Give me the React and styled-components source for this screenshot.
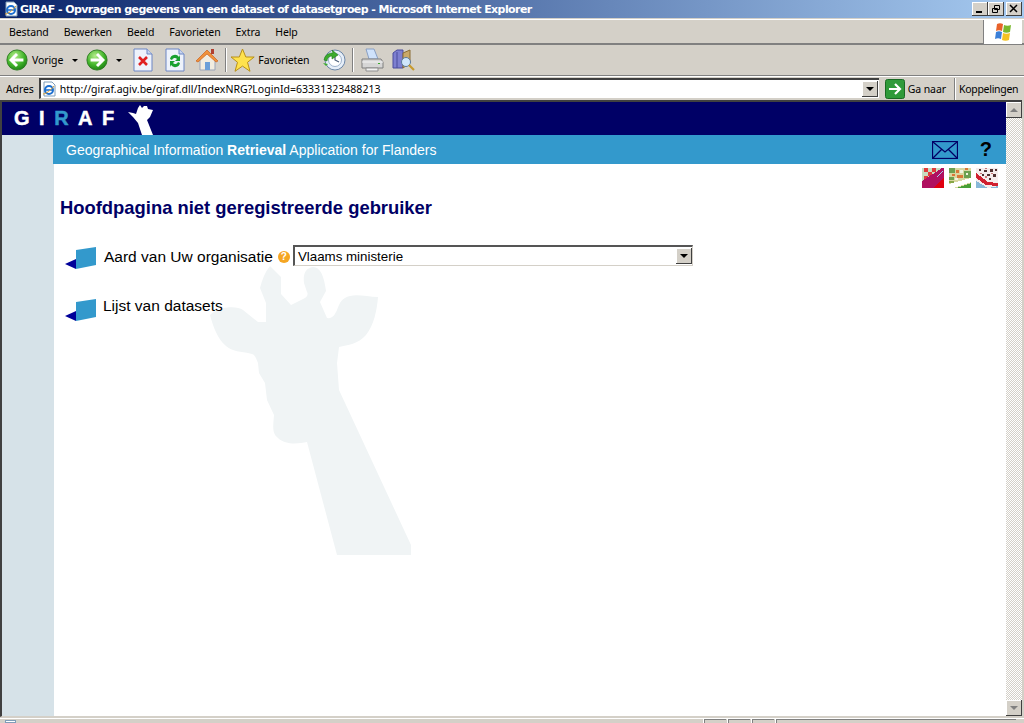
import React from 'react';
import styled, {createGlobalStyle} from 'styled-components';

const GlobalStyle = createGlobalStyle`
    html, body {
        margin: 0;
        padding: 0;
        overflow: hidden;
        background: #d4d0c8;
    }
    * { box-sizing: border-box; }
`

const Win = styled.div`
    width: 1024px;
    height: 723px;
    display: flex;
    flex-direction: column;
    overflow: hidden;
    background: #d4d0c8;
    font-family: "Noto Sans", "DejaVu Sans", sans-serif;
    font-size: 10.5px;
    letter-spacing: -0.1px;
    color: #000;
`

const TitleBar = styled.div`
    height: 18px;
    flex: none;
    display: flex;
    align-items: center;
    padding: 0 2px 0 3px;
    background: linear-gradient(90deg, #0a246a 0%, #a6caf0 100%);
`

const TitleText = styled.div`
    flex: 1;
    margin-left: 1px;
    font-family: "DejaVu Sans", sans-serif;
    font-size: 11px;
    font-weight: bold;
    letter-spacing: -0.58px;
    color: #fff;
    white-space: nowrap;
`

const CaptionBtn = styled.div`
    width: 16px;
    height: 14px;
    margin-left: ${props => props.gap || 0}px;
    background: #d4d0c8;
    box-shadow: inset -1px -1px 0 #404040, inset 1px 1px 0 #fff;
    display: flex;
    align-items: center;
    justify-content: center;
`

const MenuRow = styled.div`
    height: 26px;
    flex: none;
    display: flex;
    align-items: center;
    border-top: 1px solid #fff;
    border-bottom: 2px solid #808080;
    margin-top: 1px;
    padding-left: 9px;
`

const MenuItem = styled.span`
    margin-right: 15px;
`

const FlagBox = styled.div`
    margin-left: auto;
    width: 39px;
    height: 24px;
    margin-right: 2px;
    background: #fff;
    border-left: 1px solid #808080;
    display: flex;
    align-items: center;
    justify-content: center;
`

const ToolRow = styled.div`
    height: 31px;
    flex: none;
    display: flex;
    align-items: center;
    padding-left: 6px;
    border-bottom: 1px solid #808080;
`

const ToolIcon = styled.span`
    display: flex;
    margin-left: ${props => props.gap || 0}px;
`

const ToolLabel = styled.span`
    margin-left: ${props => props.gap || 4}px;
    white-space: nowrap;
`

const Caret = styled.span`
    width: 0;
    height: 0;
    margin-left: ${props => props.gap || 6}px;
    border-left: 3px solid transparent;
    border-right: 3px solid transparent;
    border-top: 3px solid #000;
`

const Sep = styled.span`
    width: 1px;
    height: 24px;
    margin-left: ${props => props.gap || 6}px;
    background: #808080;
    box-shadow: 1px 0 0 #fff;
`

const AddressRow = styled.div`
    height: 24px;
    flex: none;
    display: flex;
    align-items: center;
    padding-left: 6px;
    border-top: 1px solid #fff;
`

const AddressBox = styled.div`
    width: 840px;
    height: 21px;
    margin-left: 5px;
    flex: none;
    display: flex;
    align-items: center;
    background: #fff;
    border-top: 2px solid #404040;
    border-left: 2px solid #404040;
    border-bottom: 1px solid #d4d0c8;
`

const AddressText = styled.span`
    flex: 1;
    margin-left: 3px;
    letter-spacing: 0.03px;
    white-space: nowrap;
`

const DropBtn = styled.div`
    width: 16px;
    height: 16px;
    flex: none;
    margin-right: ${props => props.gap || 0}px;
    background: #d4d0c8;
    box-shadow: inset -1px -1px 0 #404040, inset 1px 1px 0 #fff;
    display: flex;
    align-items: center;
    justify-content: center;
`

const DropTri = styled.span`
    width: 0;
    height: 0;
    border-left: 4px solid transparent;
    border-right: 4px solid transparent;
    border-top: 4px solid ${props => props.color || '#000'};
`

const GoBox = styled.div`
    margin-left: 6px;
    display: flex;
    align-items: center;
    height: 22px;
    flex: none;
`

const LinksBox = styled.div`
    margin-left: 9px;
    padding-left: 3px;
    height: 22px;
    flex: none;
    display: flex;
    align-items: center;
    letter-spacing: -0.28px;
    white-space: nowrap;
    border-left: 1px solid #fff;
    box-shadow: -1px 0 0 #808080;
`

const PageFrame = styled.div`
    height: 617px;
    flex: none;
    display: flex;
    margin-right: 2px;
    border-top: 2px solid #404040;
    border-left: 2px solid #404040;
    border-bottom: 1px solid #d4d0c8;
    background: #fff;
`

const PageBody = styled.div`
    flex: 1;
    display: flex;
    flex-direction: column;
    font-family: "Liberation Sans", Arial, sans-serif;
    letter-spacing: 0;
    overflow: hidden;
`

const LogoBar = styled.div`
    height: 33px;
    flex: none;
    background: #000066;
    display: flex;
    align-items: center;
    padding-left: 12px;
`

const LogoText = styled.div`
    font-size: 20px;
    font-weight: bold;
    letter-spacing: 9.5px;
    color: #fff;
    white-space: nowrap;
    -webkit-text-stroke: 0.5px #fff;
`

const LogoR = styled.span`
    color: #3399cc;
    -webkit-text-stroke: 0.5px #3399cc;
`

const LogoGiraffe = styled.svg`
    margin-left: 4px;
    align-self: flex-end;
`

const Columns = styled.div`
    flex: 1;
    display: flex;
`

const Side = styled.div`
    width: 51px;
    flex: none;
    background: #d6e2e8;
`

const Main = styled.div`
    flex: 1;
    position: relative;
    display: flex;
    flex-direction: column;
`

const AppBar = styled.div`
    height: 29px;
    flex: none;
    background: #3399cc;
    display: flex;
    align-items: center;
    padding-left: 13px;
    font-size: 14px;
    color: #fff;
`

const AppTitle = styled.div`
    flex: 1;
`

const Help = styled.span`
    margin: 0 14px 0 22px;
    font-size: 20px;
    font-weight: bold;
    color: #000;
`

const Front = styled.div`
    flex: 1;
    position: relative;
    z-index: 1;
    display: flex;
    flex-direction: column;
`

const Content = styled.div`
    flex: 1;
    border-left: 1px solid #d6e2e8;
`

const ThumbRow = styled.div`
    display: flex;
    justify-content: flex-end;
    gap: 5px;
    padding: 4px 8px 0 0;
    height: 24px;
`

const Heading = styled.h1`
    margin: 8px 0 0 6px;
    font-size: 18.4px;
    font-weight: bold;
    color: #000066;
    line-height: 24px;
`

const Row = styled.div`
    display: flex;
    align-items: flex-start;
    margin: ${props => props.top}px 0 0 10px;
    font-size: 15.5px;
`

const RowIcon = styled.svg`
    flex: none;
    margin-top: ${props => props.top}px;
`

const Label = styled.span`
    margin: ${props => props.top}px 0 0 ${props => props.left}px;
    line-height: 18px;
`

const HelpDot = styled.span`
    width: 12px;
    height: 12px;
    margin: 6px 3px 0 5px;
    border-radius: 50%;
    background: #f5a623;
    color: #fff;
    font-size: 10px;
    font-weight: bold;
    line-height: 12px;
    text-align: center;
`

const SelectBox = styled.div`
    width: 400px;
    height: 21px;
    display: flex;
    align-items: center;
    padding-left: 3px;
    background: #fff;
    border-top: 2px solid #555;
    border-left: 2px solid #555;
    border-right: 1px solid #d4d0c8;
    border-bottom: 1px solid #d4d0c8;
    font-size: 13.33px;
`

const SelectValue = styled.span`
    flex: 1;
`

const Watermark = styled.svg`
    position: absolute;
    left: -53px;
    top: -135px;
    pointer-events: none;
    z-index: 0;
`

const ScrollBar = styled.div`
    width: 16px;
    flex: none;
    display: flex;
    flex-direction: column;
    background: repeating-conic-gradient(#d4d0c8 0 25%, #fff 0 50%) 0 0 / 2px 2px;
`

const ScrollTrack = styled.div`
    flex: 1;
`

const ScrollBtn = styled.div`
    height: 16px;
    flex: none;
    background: #d4d0c8;
    box-shadow: inset -1px -1px 0 #404040, inset 1px 1px 0 #fff;
    display: flex;
    align-items: center;
    justify-content: center;
`

const ScrollTri = styled.span`
    width: 0;
    height: 0;
    border-left: 4px solid transparent;
    border-right: 4px solid transparent;
    ${props => props.up ? 'border-bottom: 4px solid #808080;' : 'border-top: 4px solid #808080;'}
`

const StatusBar = styled.div`
    flex: 1;
    display: flex;
    border-top: 1px solid #fff;
    margin-top: 1px;
    padding-left: 5px;
    gap: 2px;
`

const StatusIcon = styled.span`
    width: 11px;
    margin: 1px 686px 0 0;
    background: #fff;
    border: 1px solid #7f9db9;
`

const StatusCell = styled.span`
    width: ${props => props.width}px;
    border-left: 1px solid #808080;
    border-top: 1px solid #808080;
    box-shadow: -1px 0 0 #fff;
`

const IeIcon = () => (
    <svg width="16" height="16" viewBox="0 0 16 16">
        <path d="M3 1h8l3 3v11H3z" fill="#fff" stroke="#7f9db9" />
        <circle cx="8" cy="9" r="4" fill="none" stroke="#1c6fd0" strokeWidth="2" />
        <path d="M4 9h8" stroke="#1c6fd0" strokeWidth="1.6" />
        <path d="M2 13c3 0 8-4 11-8" fill="none" stroke="#e0a030" strokeWidth="1" />
    </svg>
)

const RoundArrow = ({dir, size = 22}) => (
    <svg width={size} height={size} viewBox="0 0 24 24">
        <defs>
            <radialGradient id={'ra' + dir} cx="40%" cy="30%" r="75%">
                <stop offset="0" stopColor="#b4ec8a" />
                <stop offset="0.6" stopColor="#42b52a" />
                <stop offset="1" stopColor="#1b7d14" />
            </radialGradient>
        </defs>
        <circle cx="12" cy="12" r="11" fill={'url(#ra' + dir + ')'} stroke="#2b7a1f" />
        <g transform={dir === 'left' ? '' : 'matrix(-1 0 0 1 24 0)'}>
            <path d="M19 12H6.5M12 5.5 5.5 12l6.5 6.5" fill="none" stroke="#fff" strokeWidth="3.2" />
        </g>
    </svg>
)

const DocIcon = ({children}) => (
    <svg width="20" height="24" viewBox="0 0 20 24">
        <path d="M1 1h13l5 5v17H1z" fill="#eef2fb" stroke="#6d86c4" />
        <path d="M14 1v5h5" fill="#c8d4ee" stroke="#6d86c4" />
        {children}
    </svg>
)

const HomeIcon = () => (
    <svg width="24" height="24" viewBox="0 0 24 24">
        <path d="M5 11v11h15V11L12 3z" fill="#f1ece0" stroke="#9aa4b8" />
        <path d="M1 13 12 2l11 11-2 1-9-8-9 8z" fill="#f0913a" stroke="#c8601c" strokeWidth="0.7" />
        <rect x="16" y="1" width="3" height="5" fill="#b04030" />
        <rect x="10" y="14" width="5" height="8" fill="#6a9ed8" />
    </svg>
)

const StarIcon = () => (
    <svg width="25" height="25" viewBox="0 0 25 25">
        <path d="M12.5 1l3.3 8h8.4l-6.7 5.3 2.5 9-7.5-5.2L5 23.3l2.500-9L1 9h8.300z" fill="#ffe24d" stroke="#b8901a" />
    </svg>
)

const HistoryIcon = () => (
    <svg width="24" height="24" viewBox="0 0 24 24">
        <circle cx="13" cy="12" r="10" fill="#e6eef8" stroke="#6c87a8" />
        <circle cx="13" cy="12" r="6.5" fill="#fff" stroke="#9db2cc" />
        <path d="M13 7v5l4 2" fill="none" stroke="#4a5d78" strokeWidth="1.2" />
        <path d="M2 12a8 8 0 0 1 9-7l-1-3 6 5-6 4 0-3a5 5 0 0 0-5 5z" fill="#3cab2c" stroke="#1f7a18" strokeWidth="0.6" />
        <path d="M1 15l5 1-2 2z" fill="#3cab2c" />
    </svg>
)

const PrintIcon = () => (
    <svg width="24" height="24" viewBox="0 0 24 24">
        <path d="M6 1h8l4 10H9z" fill="#cfe2fb" stroke="#8aa0c4" />
        <path d="M2 11h19l2 3v6H2z" fill="#d6d6d6" stroke="#7f7f7f" />
        <path d="M2 14h21" stroke="#f4f4f4" />
        <path d="M6 20h12v3H6z" fill="#f2f2f2" stroke="#8f8f8f" />
        <rect x="18" y="15" width="2" height="1" fill="#3cab2c" />
    </svg>
)

const ResearchIcon = () => (
    <svg width="24" height="24" viewBox="0 0 24 24">
        <path d="M1 5l4-3h6v18H1z" fill="#7d7fd0" stroke="#4a4c9c" />
        <path d="M5 4v16" stroke="#4a4c9c" />
        <path d="M11 5l7-3v13l-7 5z" fill="#c9a868" stroke="#8a6d34" />
        <circle cx="14" cy="14" r="4.500" fill="#cfe6fb" stroke="#5a7a9a" />
        <path d="M17 17l5 5" stroke="#c79a2e" strokeWidth="2.200" />
    </svg>
)

const Flag = () => (
    <svg width="20" height="19" viewBox="0 0 20 19">
        <path d="M4 2c2-1 4-1 6 0l-1 7c-2-1-4-1-6 0z" fill="#e8622a" />
        <path d="M11 3c2 1 5 1 7 0l-1 7c-2 1-5 1-7 0z" fill="#7ab82c" />
        <path d="M3 10c2-1 4-1 6 0l-1 7c-2-1-4-1-6 0z" fill="#3a7fd8" />
        <path d="M10 11c2 1 5 1 7 0l-1 7c-2 1-5 1-7 0z" fill="#f4c222" />
    </svg>
)

const GiraffeHead = () => (
    <LogoGiraffe width="27" height="30" viewBox="0 0 27 30">
        <path d="M0 7 5 8 8 9 10 3 12 0 14 3 16 1 19 1 20 4 25 5 22 12 19 15 25 30 14 30 10 18 5 12z" fill="#fff" />
    </LogoGiraffe>
)

const MailIcon = () => (
    <svg width="26" height="18" viewBox="0 0 26 18">
        <rect x="0.500" y="0.500" width="25" height="17" fill="none" stroke="#000066" strokeWidth="1.300" />
        <path d="M1 1l12 10L25 1M1 17l9-9M25 17l-9-9" fill="none" stroke="#000066" strokeWidth="1.300" />
    </svg>
)

const ThumbOne = () => (
    <svg width="22" height="20" viewBox="0 0 22 20" shapeRendering="crispEdges">
        <rect width="22" height="20" fill="#c8dcc0" />
        <path d="M2 0h4v4H2zM10 0h4v4h-4zM6 4h4v4H6zM14 4h4v3h-4zM2 8h4v4H2zM10 8h4v3h-4z" fill="#e03c3c" />
        <path d="M0 20V13L20 0h2v20z" fill="#b01060" />
        <path d="M12 20l10-11v11z" fill="#e00010" />
        <path d="M14 9l6-6h1l-6 7z" fill="#a8c8f0" />
    </svg>
)

const ThumbTwo = () => (
    <svg width="22" height="20" viewBox="0 0 22 20" shapeRendering="crispEdges">
        <rect width="22" height="20" fill="#d8d8a0" />
        <path d="M0 0h6v5H0zM15 3h7v7h-7zM0 9h5v3H0z" fill="#6ca050" />
        <path d="M7 2h3v3H7zM8 7h6v3H8zM16 0h3v2h-3zM3 6h3v2H3z" fill="#d87838" />
        <path d="M0 16l22-6v4L4 20H0z" fill="#fff" />
        <path d="M8 20l14-5v5z" fill="#48a038" />
        <path d="M11 2h3v3h-3zM6 10h3v2H6zM17 5h2v2h-2z" fill="#f0f4e0" />
        <path d="M0 13h5v2H0z" fill="#88a848" />
    </svg>
)

const ThumbThree = () => (
    <svg width="22" height="20" viewBox="0 0 22 20" shapeRendering="crispEdges">
        <rect width="22" height="20" fill="#f4ecec" />
        <path d="M3 1h2v2H3zM8 2h3v2H8zM14 1h3v3h-3zM11 6h3v2h-3zM17 6h3v3h-3zM6 6h2v2H6zM19 1h2v2h-2zM13 10h2v2h-2z" fill="#503030" />
        <path d="M9 0h2v1H9zM4 5h2v1H4zM15 5h2v1h-2zM9 8h2v2H9z" fill="#c87878" />
        <path d="M0 5l12 9 10 1v3L10 17 0 10z" fill="#d02030" />
        <path d="M0 13l12 7H0z" fill="#88b8d8" />
        <path d="M12 20l10-2v2z" fill="#88b8d8" />
    </svg>
)

const LinkIcon = ({top}) => (
    <RowIcon top={top} width="33" height="24" viewBox="0 0 33 24">
        <path d="M1 18 12 13v10z" fill="#000099" />
        <path d="M12 4 32 1v18L12 23z" fill="#3399cc" />
    </RowIcon>
)

const menuItems = ['Bestand', 'Bewerken', 'Beeld', 'Favorieten', 'Extra', 'Help'];

export default class App extends React.Component {

    render() {
        return (
            <>
                <GlobalStyle/>
                <Win>
                    <TitleBar>
                        <IeIcon/>
                        <TitleText>GIRAF - Opvragen gegevens van een dataset of datasetgroep - Microsoft Internet Explorer</TitleText>
                        <CaptionBtn>
                            <svg width="10" height="10"><rect x="1" y="7" width="6" height="2" fill="#000" /></svg>
                        </CaptionBtn>
                        <CaptionBtn>
                            <svg width="10" height="10"><path d="M3.500 1.500h5v4h-5zM1.500 4.500h5v4h-5z" fill="#d4d0c8" stroke="#000" /></svg>
                        </CaptionBtn>
                        <CaptionBtn gap={2}>
                            <svg width="10" height="10"><path d="M1 1l7 7M8 1l-7 7" stroke="#000" strokeWidth="1.500" /></svg>
                        </CaptionBtn>
                    </TitleBar>
                    <MenuRow>
                        {menuItems.map((item) => <MenuItem key={item}>{item}</MenuItem>)}
                        <FlagBox><Flag/></FlagBox>
                    </MenuRow>
                    <ToolRow>
                        <RoundArrow dir="left"/>
                        <ToolLabel gap={4}>Vorige</ToolLabel>
                        <Caret gap={9}/>
                        <ToolIcon gap={8}><RoundArrow dir="right"/></ToolIcon>
                        <Caret gap={8}/>
                        <ToolIcon gap={11}>
                            <DocIcon><path d="M6 9l8 8M14 9l-8 8" stroke="#e02020" strokeWidth="2.600" /></DocIcon>
                        </ToolIcon>
                        <ToolIcon gap={12}>
                            <DocIcon>
                                <path d="M5 11a5 5 0 0 1 9-2l1-2v6h-5l2-2a3 3 0 0 0-5 1zM15 15a5 5 0 0 1-9 2l-1 2v-6h5l-2 2a3 3 0 0 0 5-1z" fill="#18a030" />
                            </DocIcon>
                        </ToolIcon>
                        <ToolIcon gap={10}><HomeIcon/></ToolIcon>
                        <Sep gap={6}/>
                        <ToolIcon gap={4}><StarIcon/></ToolIcon>
                        <ToolLabel gap={3}>Favorieten</ToolLabel>
                        <ToolIcon gap={13}><HistoryIcon/></ToolIcon>
                        <Sep gap={6}/>
                        <ToolIcon gap={7}><PrintIcon/></ToolIcon>
                        <ToolIcon gap={8}><ResearchIcon/></ToolIcon>
                    </ToolRow>
                    <AddressRow>
                        Adres
                        <AddressBox>
                            <IeIcon/>
                            <AddressText>http://giraf.agiv.be/giraf.dll/IndexNRG?LoginId=63331323488213</AddressText>
                            <DropBtn gap={1}><DropTri/></DropBtn>
                        </AddressBox>
                        <GoBox>
                            <svg width="20" height="20" viewBox="0 0 20 20">
                                <rect x="0.500" y="0.500" width="19" height="19" rx="2" fill="#2f9a3a" stroke="#1a6a24" />
                                <path d="M4 10h10M10 5l5 5-5 5" fill="none" stroke="#fff" strokeWidth="2.200" />
                            </svg>
                            <ToolLabel gap={3}>Ga naar</ToolLabel>
                        </GoBox>
                        <LinksBox>Koppelingen</LinksBox>
                    </AddressRow>
                    <PageFrame>
                        <PageBody>
                            <LogoBar>
                                <LogoText>GI<LogoR>R</LogoR>AF</LogoText>
                                <GiraffeHead/>
                            </LogoBar>
                            <Columns>
                                <Side/>
                                <Main>
                                    <Watermark width="1024" height="723" viewBox="0 0 1024 723">
                                        <path d="M270 266 281 277 281 294 291 305 305 298C308 296 308 293 307 292L304 283C303 275 305 268 313 267 320 267 324 275 326 291L320 302 327 318C333 319 335 314 337 310 340 302 342 298 350 296 358 294 368 297 378 297 377 310 374 325 366 335 358 344 348 345 339 347L337 363 339 390 411 545 411 555 337 555 307 442C298 444 285 445 278 438 272 433 273 428 274 415L267 400 265 383 259 373 258 363C256 358 255 355 252 354 245 352 238 352 233 350 220 345 214 330 210 315 218 307 236 305 243 310L258 322 266 322 266 303 260 288C262 280 265 272 270 266z" fill="#f0f4f5" />
                                    </Watermark>
                                    <Front>
                                        <AppBar>
                                            <AppTitle>Geographical Information <b>Retrieval</b> Application for Flanders</AppTitle>
                                            <MailIcon/>
                                            <Help>?</Help>
                                        </AppBar>
                                        <Content>
                                            <ThumbRow>
                                                <ThumbOne/>
                                                <ThumbTwo/>
                                                <ThumbThree/>
                                            </ThumbRow>
                                            <Heading>Hoofdpagina niet geregistreerde gebruiker</Heading>
                                            <Row top={25}>
                                                <LinkIcon top={1}/>
                                                <Label top={3} left={7}>Aard van Uw organisatie</Label>
                                                <HelpDot>?</HelpDot>
                                                <SelectBox>
                                                    <SelectValue>Vlaams ministerie</SelectValue>
                                                    <DropBtn><DropTri/></DropBtn>
                                                </SelectBox>
                                            </Row>
                                            <Row top={27}>
                                                <LinkIcon top={1}/>
                                                <Label top={0} left={6}>Lijst van datasets</Label>
                                            </Row>
                                        </Content>
                                    </Front>
                                </Main>
                            </Columns>
                        </PageBody>
                        <ScrollBar>
                            <ScrollBtn><ScrollTri up/></ScrollBtn>
                            <ScrollTrack/>
                            <ScrollBtn><ScrollTri/></ScrollBtn>
                        </ScrollBar>
                    </PageFrame>
                    <StatusBar>
                        <StatusIcon/>
                        <StatusCell width={22}/>
                        <StatusCell width={22}/>
                        <StatusCell width={22}/>
                        <StatusCell width={240}/>
                    </StatusBar>
                </Win>
            </>
        )
    }
}
